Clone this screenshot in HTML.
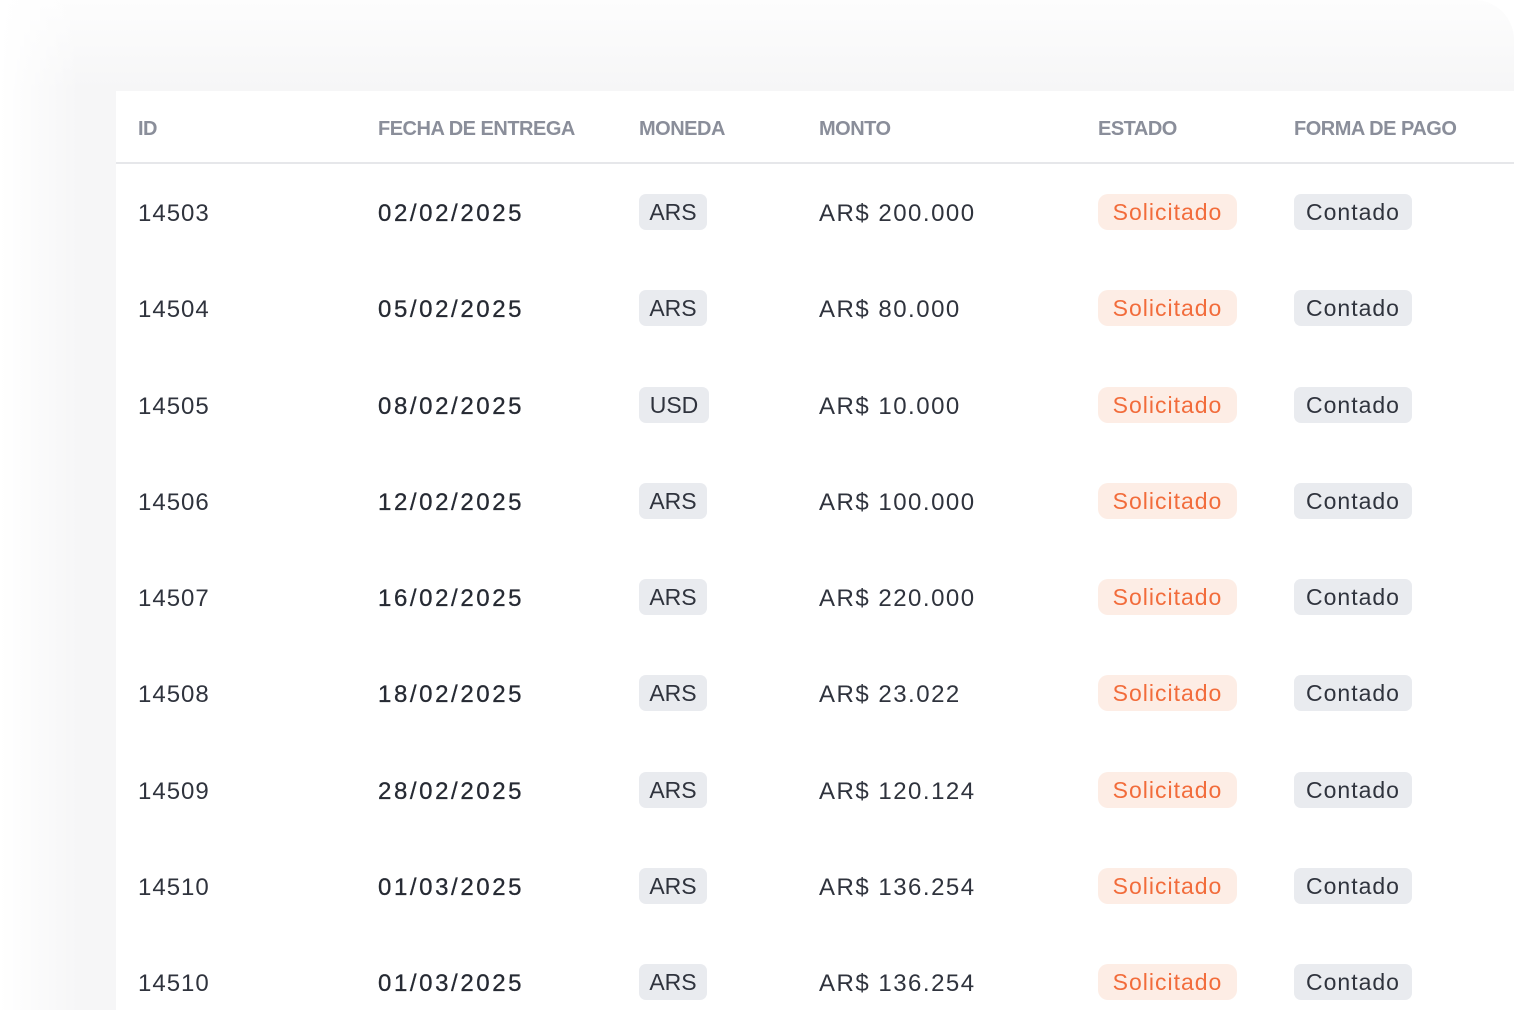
<!DOCTYPE html>
<html><head><meta charset="utf-8"><style>
html,body{margin:0;padding:0;width:1514px;height:1010px;overflow:hidden;background:#fff;font-family:"Liberation Sans",sans-serif;}
.bg{position:absolute;left:0;top:0;width:1514px;height:1010px;border-top-right-radius:40px;
background:linear-gradient(to right,rgba(255,255,255,1) 0px,rgba(255,255,255,0) 80px),linear-gradient(to bottom,#fdfdfd 0px,#f6f6f7 90px,#f6f6f7 1010px);}
.card{position:absolute;left:116px;top:91px;width:1398px;height:919px;background:#fff;}
.h{position:absolute;top:117px;font-size:20px;font-weight:bold;color:#8a8e9a;letter-spacing:-0.5px;line-height:24px;}
.line{position:absolute;left:116px;top:162px;width:1398px;height:2px;background:#e6e7ea;}
.t{position:absolute;font-size:24px;color:#2f333d;line-height:28px;}
.pill{position:absolute;height:36px;border-radius:7px;font-size:23px;line-height:37px;text-align:center;letter-spacing:1px;}
.g{background:#e9ebef;color:#2f333d;}
.o{background:#fdede5;color:#f26c3b;border-radius:10px;}
</style></head><body>
<div class="bg"></div>
<div class="card"></div>
<div class="h" style="left:138px">ID</div>
<div class="h" style="left:378px">FECHA DE ENTREGA</div>
<div class="h" style="left:639px">MONEDA</div>
<div class="h" style="left:819px">MONTO</div>
<div class="h" style="left:1098px">ESTADO</div>
<div class="h" style="left:1294px">FORMA DE PAGO</div>
<div class="line"></div>
<div id="rows"></div>
<script>
var d=[["14503","02/02/2025","ARS","AR$ 200.000"],["14504","05/02/2025","ARS","AR$ 80.000"],["14505","08/02/2025","USD","AR$ 10.000"],["14506","12/02/2025","ARS","AR$ 100.000"],["14507","16/02/2025","ARS","AR$ 220.000"],["14508","18/02/2025","ARS","AR$ 23.022"],["14509","28/02/2025","ARS","AR$ 120.124"],["14510","01/03/2025","ARS","AR$ 136.254"],["14510","01/03/2025","ARS","AR$ 136.254"]];
var h="";
d.forEach(function(r,i){var c=212+i*96.25;var ty=c-12;var py=c-18;
h+='<div class="t" style="left:138px;top:'+ty+'px;letter-spacing:1px">'+r[0]+'</div>';
h+='<div class="t" style="left:378px;top:'+ty+'px;letter-spacing:2.6px;color:#262a33;-webkit-text-stroke:0.3px #262a33">'+r[1]+'</div>';
h+='<div class="pill g" style="left:639px;top:'+py+'px;width:'+(r[2]=="USD"?70:68)+'px;letter-spacing:0">'+r[2]+'</div>';
h+='<div class="t" style="left:819px;top:'+ty+'px;letter-spacing:1.5px">'+r[3]+'</div>';
h+='<div class="pill o" style="left:1098px;top:'+py+'px;width:139px">Solicitado</div>';
h+='<div class="pill g" style="left:1294px;top:'+py+'px;width:118px">Contado</div>';});
document.getElementById("rows").innerHTML=h;
</script>
</body></html>
